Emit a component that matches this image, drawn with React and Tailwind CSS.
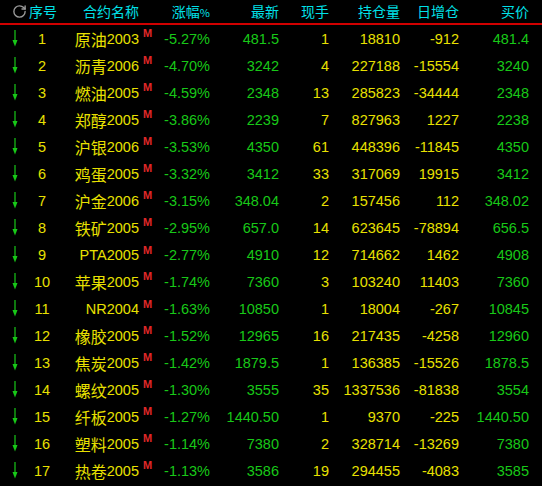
import React from 'react';
import { RotateCw } from 'lucide-react';

const rows = [
  ['原油', '2003', '-5.27%', '481.5', '1', '18810', '-912', '481.4'],
  ['沥青', '2006', '-4.70%', '3242', '4', '227188', '-15554', '3240'],
  ['燃油', '2005', '-4.59%', '2348', '13', '285823', '-34444', '2348'],
  ['郑醇', '2005', '-3.86%', '2239', '7', '827963', '1227', '2238'],
  ['沪银', '2006', '-3.53%', '4350', '61', '448396', '-11845', '4350'],
  ['鸡蛋', '2005', '-3.32%', '3412', '33', '317069', '19915', '3412'],
  ['沪金', '2006', '-3.15%', '348.04', '2', '157456', '112', '348.02'],
  ['铁矿', '2005', '-2.95%', '657.0', '14', '623645', '-78894', '656.5'],
  ['', 'PTA2005', '-2.77%', '4910', '12', '714662', '1462', '4908'],
  ['苹果', '2005', '-1.74%', '7360', '3', '103240', '11403', '7360'],
  ['', 'NR2004', '-1.63%', '10850', '1', '18004', '-267', '10845'],
  ['橡胶', '2005', '-1.52%', '12965', '16', '217435', '-4258', '12960'],
  ['焦炭', '2005', '-1.42%', '1879.5', '1', '136385', '-15526', '1878.5'],
  ['螺纹', '2005', '-1.30%', '3555', '35', '1337536', '-81838', '3554'],
  ['纤板', '2005', '-1.27%', '1440.50', '1', '9370', '-225', '1440.50'],
  ['塑料', '2005', '-1.14%', '7380', '2', '328714', '-13269', '7380'],
  ['热卷', '2005', '-1.13%', '3586', '19', '294455', '-4083', '3585'],
];

const cols = 'grid grid-cols-[28px_28px_100px_54px_69px_50px_71px_59px_70px]';
const cn = { fontFamily: '"Noto Sans CJK SC", sans-serif' };
const num = { fontFamily: '"Liberation Sans", "Noto Sans CJK SC", sans-serif' };

const DownArrow = () => (
  <svg width="12" height="18" viewBox="0 0 12 18">
    <line x1="6" y1="0" x2="6" y2="14" stroke="#18c818" strokeWidth="1.2" />
    <polygon points="3.5,10 8.5,10 6,16.5" fill="#18c818" />
  </svg>
);

const App = () => {
  return (
    <div className="w-[542px] h-[486px] bg-black overflow-hidden select-none">
      <div className={`${cols} h-[25px] items-center border-b-2 border-[#d00000] text-[14px] text-[#00e0e8]`} style={cn}>
        <div className="flex justify-end pr-[1px]">
          <RotateCw size={15} strokeWidth={2.2} color="#9a9a9a" />
        </div>
        <div className="pl-[1px] whitespace-nowrap">序号</div>
        <div className="text-right pr-[17px]">合约名称</div>
        <div className="text-right whitespace-nowrap">涨幅<span className="text-[11px]">%</span></div>
        <div className="text-right">最新</div>
        <div className="text-right">现手</div>
        <div className="text-right">持仓量</div>
        <div className="text-right">日增仓</div>
        <div className="text-right">买价</div>
      </div>
      {rows.map((r, i) => (
        <div key={i} className={`${cols} h-[27px] items-center text-[14.5px] leading-none pt-[1px]`} style={num}>
          <div className="flex justify-end pr-[7px]">
            <DownArrow />
          </div>
          <div className="text-center text-[#e8e000]">{i + 1}</div>
          <div className="flex justify-end items-start text-[#e8e000]">
            <span className="whitespace-nowrap flex items-center">
              {r[0] && <span className="text-[16px] leading-none" style={cn}>{r[0]}</span>}
              <span>{r[1]}</span>
            </span>
            <span className="w-[17px] pl-[4px] -mt-[3px] text-[11px] font-bold text-[#e02828] leading-none">M</span>
          </div>
          <div className="text-right text-[#18c818]">{r[2]}</div>
          <div className="text-right text-[#18c818]">{r[3]}</div>
          <div className="text-right text-[#e8e000]">{r[4]}</div>
          <div className="text-right text-[#e8e000]">{r[5]}</div>
          <div className="text-right text-[#e8e000]">{r[6]}</div>
          <div className="text-right text-[#18c818]">{r[7]}</div>
        </div>
      ))}
    </div>
  );
};

export default App;
